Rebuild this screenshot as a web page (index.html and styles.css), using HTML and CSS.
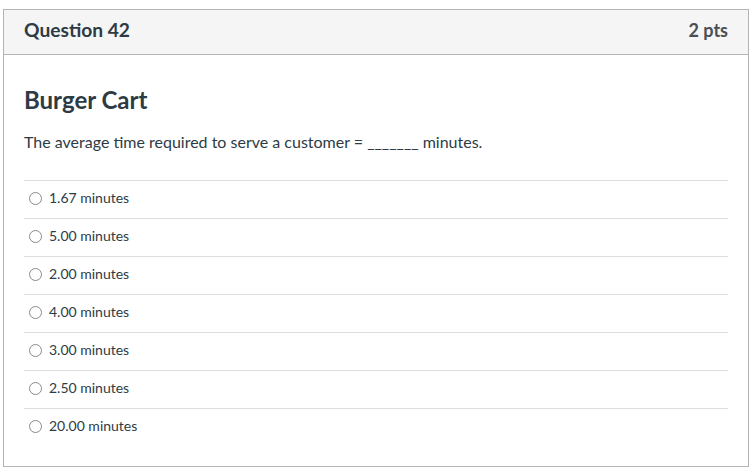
FILE: index.html
```html
<!DOCTYPE html>
<html lang="en">
<head>
<meta charset="utf-8">
<title>Question 42</title>
<link rel="stylesheet" href="styles.css">
</head>
<body>
<div class="question">
  <div class="header">
    <span class="name">Question 42</span>
    <span class="points">2 pts</span>
  </div>
  <div class="content">
    <h2 class="title">Burger Cart</h2>
    <p class="text">The average time required to serve a customer = _______ minutes.</p>
    <div class="answers">
      <label class="answer"><span class="radio"></span><span class="label">1.67 minutes</span></label>
      <label class="answer"><span class="radio"></span><span class="label">5.00 minutes</span></label>
      <label class="answer"><span class="radio"></span><span class="label">2.00 minutes</span></label>
      <label class="answer"><span class="radio"></span><span class="label">4.00 minutes</span></label>
      <label class="answer"><span class="radio"></span><span class="label">3.00 minutes</span></label>
      <label class="answer"><span class="radio"></span><span class="label">2.50 minutes</span></label>
      <label class="answer"><span class="radio"></span><span class="label">20.00 minutes</span></label>
    </div>
  </div>
</div>
</body>
</html>
```
FILE: styles.css
```css
html, body {
  margin: 0;
  padding: 0;
  background: #ffffff;
}
body {
  font-family: Lato, "Liberation Sans", sans-serif;
  color: #2d3b45;
}
.question {
  margin: 9px 0 0 3px;
  width: 746px;
  height: 458px;
  box-sizing: border-box;
  border: 1px solid #b4b4b4;
}
.header {
  display: flex;
  justify-content: space-between;
  align-items: center;
  background: #f5f5f5;
  border-bottom: 1px solid #b4b4b4;
  height: 40px;
  line-height: 40px;
  padding: 0 20px 4px;
}
.name {
  font-size: 19.2px;
  font-weight: 700;
  color: #2d3b45;
}
.points {
  font-size: 18px;
  font-weight: 700;
  color: #4a4f54;
}
.content {
  padding: 30px 20px 20px;
}
.title {
  margin: 0;
  font-size: 24px;
  line-height: 30px;
  font-weight: 700;
  color: #2d3b45;
}
.text {
  margin: 15px 0 0;
  font-size: 16px;
  line-height: 24px;
}
.answers {
  margin-top: 26px;
  display: flex;
  flex-direction: column;
}
.answer {
  display: flex;
  align-items: center;
  box-sizing: content-box;
  height: 33px;
  padding-bottom: 4px;
  border-top: 1px solid #dedede;
}
.radio {
  width: 11px;
  height: 11px;
  border: 1px solid #8a8a8a;
  border-radius: 50%;
  background: #fff;
  margin-left: 5px;
  margin-right: 7px;
  margin-top: 2px;
}
.label {
  font-size: 14px;
  line-height: 20px;
  color: #2d3b45;
}
```
